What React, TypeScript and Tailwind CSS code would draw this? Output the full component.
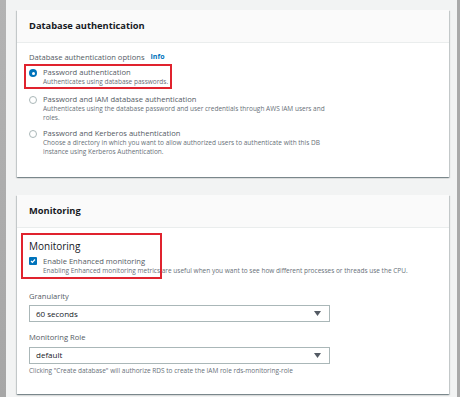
import React from "react";

const font = { fontFamily: '"Open Sans", "Noto Sans", Arial, sans-serif' };

type Opt = { title: string; desc: string; checked?: boolean; boxed?: boolean };

const options: Opt[] = [
  {
    title: "Password authentication",
    desc: "Authenticates using database passwords.",
    checked: true,
    boxed: true,
  },
  {
    title: "Password and IAM database authentication",
    desc: "Authenticates using the database password and user credentials through AWS IAM users and roles.",
  },
  {
    title: "Password and Kerberos authentication",
    desc: "Choose a directory in which you want to allow authorized users to authenticate with this DB instance using Kerberos Authentication.",
  },
];

function Radio({ checked }: { checked?: boolean }) {
  return checked ? (
    <span className="mt-[2px] flex h-[8px] w-[8px] shrink-0 items-center justify-center rounded-full bg-[#0073bb]">
      <span className="h-[3px] w-[3px] rounded-full bg-white" />
    </span>
  ) : (
    <span className="mt-[2px] h-[8px] w-[8px] shrink-0 rounded-full border border-[#aab7b8] bg-white" />
  );
}

function Card({ title, children }: { title: string; children: React.ReactNode }) {
  return (
    <div className="bg-white shadow-[0_1px_1px_0_rgba(0,28,36,0.3),1px_1px_1px_0_rgba(0,28,36,0.15),-1px_1px_1px_0_rgba(0,28,36,0.15)]">
      <div className="flex h-[33px] items-center border-b border-[#eaeded] bg-[#fafafa] px-[12px]">
        <h2 className="text-[9.3px] font-bold text-[#16191f]">{title}</h2>
      </div>
      {children}
    </div>
  );
}

function Select({ value }: { value: string }) {
  return (
    <div className="flex h-[17px] w-[301px] items-center justify-between border border-[#aab7b8] bg-white pl-[6px] pr-[8px]">
      <span className="text-[8px] text-[#16191f]">{value}</span>
      <svg width="7" height="5" viewBox="0 0 7 5">
        <path d="M0 0h7L3.5 5z" fill="#545b64" />
      </svg>
    </div>
  );
}

export default function App() {
  return (
    <div className="flex h-[397px] w-[460px] overflow-hidden" style={font}>
      <div className="w-[6px] bg-gradient-to-b from-[#b3b3b3] to-[#a6a6a6]" />
      <div className="flex flex-1 flex-col gap-[18px] bg-[#f2f3f3] pl-[11px] pr-[8px] pt-[10px]">
        <Card title="Database authentication">
          <div className="h-[134px] px-[12px] pt-[9px]">
            <div className="flex items-center gap-[6px] text-[7.6px] text-[#545b64]">
              <span>Database authentication options</span>
              <span className="text-[7px] font-bold text-[#0073bb]">Info</span>
            </div>
            <div className="mt-[2px] flex flex-col gap-[6px]">
              {options.map((o) => (
                <div
                  key={o.title}
                  className={
                    o.boxed
                      ? "-mx-[5px] -my-[1px] w-[148px] border-2 border-[#e0232e] px-[3px] py-[1px]"
                      : "w-[300px]"
                  }
                >
                  <div className="flex gap-[6px]">
                    <Radio checked={o.checked} />
                    <div className={o.boxed ? "whitespace-nowrap" : ""}>
                      <div className="text-[7.6px] leading-[10px] text-[#545b64]">{o.title}</div>
                      <div className="text-[6.5px] leading-[9px] text-[#687078]">{o.desc}</div>
                    </div>
                  </div>
                </div>
              ))}
            </div>
          </div>
        </Card>
        <Card title="Monitoring">
          <div className="px-[12px] pt-[5px]">
            <div className="-mx-[8px] w-[141px] border-2 border-[#e0232e] px-[6px] pb-[2px] pt-[4px]">
              <div className="text-[10px] leading-[14px] text-[#16191f]">Monitoring</div>
              <div className="mt-[3px] flex gap-[6px]">
                <span className="mt-[1px] flex h-[8px] w-[8px] shrink-0 items-center justify-center rounded-[1px] bg-[#0073bb]">
                  <svg width="6" height="6" viewBox="0 0 6 6">
                    <path d="M1 3l1.4 1.4L5 1.5" stroke="white" strokeWidth="1.2" fill="none" />
                  </svg>
                </span>
                <div className="whitespace-nowrap">
                  <div className="text-[7.6px] leading-[10px] text-[#545b64]">Enable Enhanced monitoring</div>
                  <div className="text-[6.5px] leading-[9px] text-[#687078]">
                    Enabling Enhanced monitoring metrics are useful when you want to see how different processes or threads use the CPU.
                  </div>
                </div>
              </div>
            </div>
            <div className="mt-[12px] text-[7.6px] text-[#545b64]">Granularity</div>
            <div className="mt-[3px]">
              <Select value="60 seconds" />
            </div>
            <div className="mt-[10px] text-[7.6px] text-[#545b64]">Monitoring Role</div>
            <div className="mt-[3px]">
              <Select value="default" />
            </div>
            <div className="mt-[2px] pb-[18px] text-[6.5px] text-[#687078]">
              Clicking "Create database" will authorize RDS to create the IAM role rds-monitoring-role
            </div>
          </div>
        </Card>
      </div>
      <div className="w-[3px] bg-[#a9a9a9]" />
    </div>
  );
}
